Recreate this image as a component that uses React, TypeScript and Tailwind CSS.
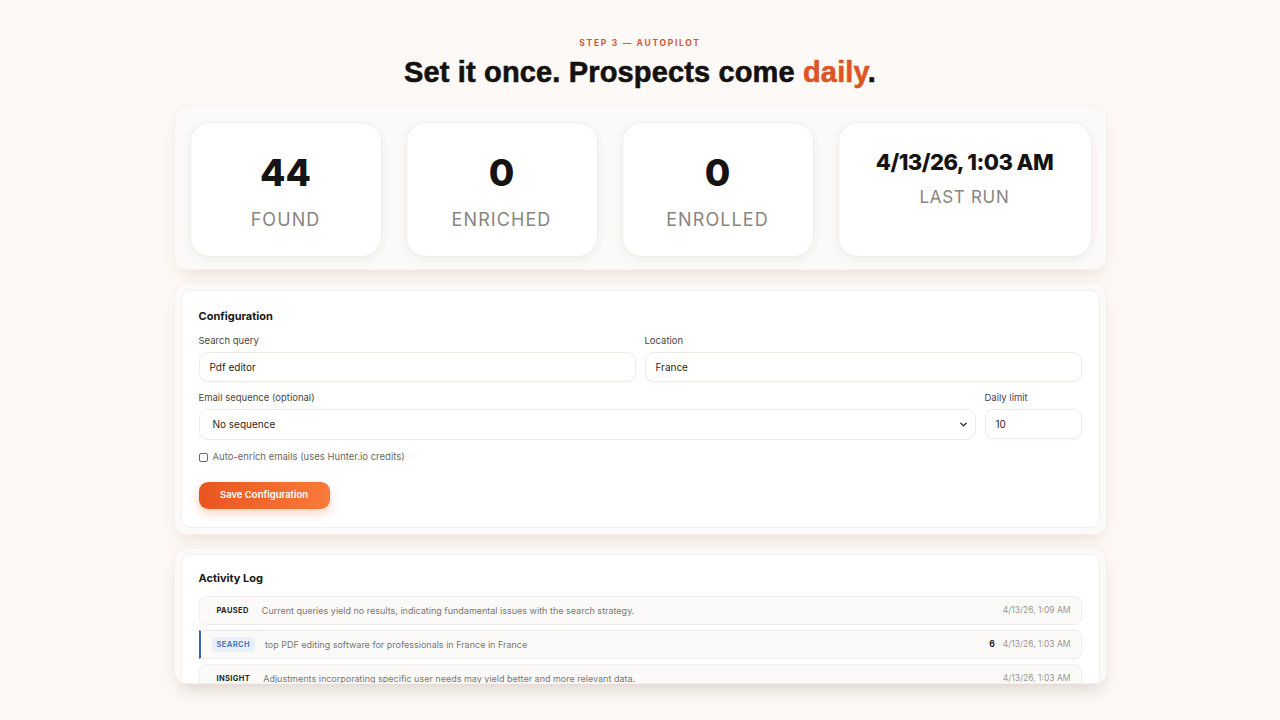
import { ChevronDown } from 'lucide-react';

const stats = [
  { value: '44', label: 'FOUND' },
  { value: '0', label: 'ENRICHED' },
  { value: '0', label: 'ENROLLED' },
];

const logs = [
  {
    tag: 'PAUSED',
    kind: 'plain',
    text: 'Current queries yield no results, indicating fundamental issues with the search strategy.',
    count: '',
    time: '4/13/26, 1:09 AM',
  },
  {
    tag: 'SEARCH',
    kind: 'search',
    text: 'top PDF editing software for professionals in France in France',
    count: '6',
    time: '4/13/26, 1:03 AM',
  },
  {
    tag: 'INSIGHT',
    kind: 'plain',
    text: 'Adjustments incorporating specific user needs may yield better and more relevant data.',
    count: '',
    time: '4/13/26, 1:03 AM',
  },
];

function Field({ label, value, className = '' }: { label: string; value: string; className?: string }) {
  return (
    <div className={`flex flex-col ${className}`}>
      <label className="text-[9.5px] text-[#4a4642] mb-[5px] leading-[12px]">{label}</label>
      <div className="h-[30px] bg-white border border-[#efebe7] rounded-[9px] px-[10px] flex items-center text-[10px] text-[#2a2622] shadow-[0_1px_2px_rgba(0,0,0,0.03)]">
        {value}
      </div>
    </div>
  );
}

export default function App() {
  return (
    <div className="min-h-[720px] bg-[#fdf9f6] pt-[37px] font-['Inter',sans-serif] text-[#1c1917]">
      <div className="text-center text-[8.5px] font-bold tracking-[0.2em] text-[#d4582e] leading-[12px]">
        STEP 3 — AUTOPILOT
      </div>
      <h1 className="mt-[5px] text-center font-['Liberation_Sans',Arial,sans-serif] font-bold text-[29px] leading-[36px] tracking-[0.005em] text-[#141210] [-webkit-text-stroke:0.6px_#141210]">
        Set it once. Prospects come <span className="text-[#dd5526] [-webkit-text-stroke:0.6px_#dd5526]">daily</span>.
      </h1>

      <div className="w-[933px] mx-auto mt-[15px] flex flex-col gap-[13px]">
        {/* Stats */}
        <div className="bg-[#fcfaf8] rounded-[12px] pt-[16px] pb-[12px] pl-[15px] pr-[14px] shadow-[0_10px_18px_-6px_rgba(190,150,130,0.28)] border border-[#f6f1ec]">
          <div className="grid grid-cols-[192px_192px_192px_254px] gap-[24px]">
            {stats.map((s) => (
              <div
                key={s.label}
                className="h-[135px] bg-white rounded-[20px] border border-[#f1ede9] shadow-[0_3px_8px_rgba(120,100,90,0.08)] flex flex-col items-center pt-[28px]"
              >
                <div className="text-[37px] leading-[44px] font-extrabold text-[#161412]">{s.value}</div>
                <div className="mt-[14px] text-[18px] leading-[22px] tracking-[0.06em] text-[#8a8581]">{s.label}</div>
              </div>
            ))}
            <div className="h-[135px] bg-white rounded-[20px] border border-[#f1ede9] shadow-[0_3px_8px_rgba(120,100,90,0.08)] flex flex-col items-center pt-[25px]">
              <div className="text-[22px] leading-[28px] font-extrabold tracking-[-0.025em] text-[#161412]">4/13/26, 1:03 AM</div>
              <div className="mt-[10px] text-[17px] leading-[22px] tracking-[0.04em] text-[#8a8581]">LAST RUN</div>
            </div>
          </div>
        </div>

        {/* Configuration */}
        <div className="bg-[#fcfaf8] rounded-[12px] p-[6px] shadow-[0_10px_18px_-6px_rgba(190,150,130,0.28)] border border-[#f6f1ec]">
          <div className="bg-white rounded-[10px] border border-[#f3efeb] pl-[17px] pr-[17px] pt-[18px] pb-[18px]">
            <div className="text-[11px] font-bold leading-[14px] text-[#1a1715]">Configuration</div>
            <div className="mt-[12px] grid grid-cols-2 gap-[9px]">
              <Field label="Search query" value="Pdf editor" />
              <Field label="Location" value="France" />
            </div>
            <div className="mt-[10px] flex gap-[9px]">
              <div className="flex-1 flex flex-col">
                <label className="text-[9.5px] text-[#4a4642] mb-[5px] leading-[12px]">Email sequence (optional)</label>
                <div className="h-[31px] bg-white border border-[#efebe7] rounded-[9px] pl-[13px] pr-[6px] flex items-center justify-between text-[10px] text-[#2a2622]">
                  <span>No sequence</span>
                  <ChevronDown size={11} strokeWidth={3} className="text-[#222]" />
                </div>
              </div>
              <Field label="Daily limit" value="10" className="w-[97px]" />
            </div>
            <div className="mt-[10px] h-[14px] flex items-center gap-[5px]">
              <div className="w-[9px] h-[9px] border border-[#6b6763] rounded-[2px] bg-white" />
              <span className="text-[9.5px] leading-[14px] text-[#6b6763]">Auto-enrich emails (uses Hunter.io credits)</span>
            </div>
            <button className="mt-[18px] h-[27px] w-[131px] rounded-[9px] bg-gradient-to-r from-[#ea5520] to-[#f97a3a] text-white text-[9.5px] font-semibold shadow-[0_4px_10px_rgba(240,100,40,0.3)] block">
              Save Configuration
            </button>
          </div>
        </div>

        {/* Activity log */}
        <div className="h-[136px] overflow-hidden bg-[#fcfaf8] rounded-[12px] px-[6px] pt-[5px] shadow-[0_10px_18px_-6px_rgba(150,130,120,0.35)] border border-[#f6f1ec]">
          <div className="bg-white rounded-t-[10px] border border-[#f3efeb] pl-[17px] pr-[17px] pt-[16px] pb-[20px]">
            <div className="text-[11px] font-bold leading-[14px] text-[#1a1715]">Activity Log</div>
            <div className="mt-[11px] flex flex-col gap-[5px]">
              {logs.map((l, i) => (
                <div
                  key={i}
                  className={`h-[29px] rounded-[7px] bg-[#fbfaf8] border border-[#f1eeea] flex items-center pr-[10px] ${
                    l.kind === 'search' ? 'border-l-2 border-l-[#3a66b0] rounded-l-none pl-[11px]' : 'pl-[17px]'
                  }`}
                >
                  {l.kind === 'search' ? (
                    <span className="px-[5px] py-[2px] rounded-[4px] bg-[#e9f0fa] text-[#4b7bc4] text-[7.5px] font-bold tracking-[0.05em]">
                      {l.tag}
                    </span>
                  ) : (
                    <span className="text-[7.5px] font-bold tracking-[0.05em] text-[#2a2622]">{l.tag}</span>
                  )}
                  <span className={`${l.kind === 'search' ? 'ml-[10px]' : 'ml-[13px]'} flex-1 text-[9px] text-[#7a7672] truncate`}>
                    {l.text}
                  </span>
                  {l.count && <span className="text-[8.5px] font-bold text-[#1a1715] mr-[8px]">{l.count}</span>}
                  <span className="text-[8.5px] text-[#9a9692]">{l.time}</span>
                </div>
              ))}
            </div>
          </div>
        </div>
      </div>
    </div>
  );
}
